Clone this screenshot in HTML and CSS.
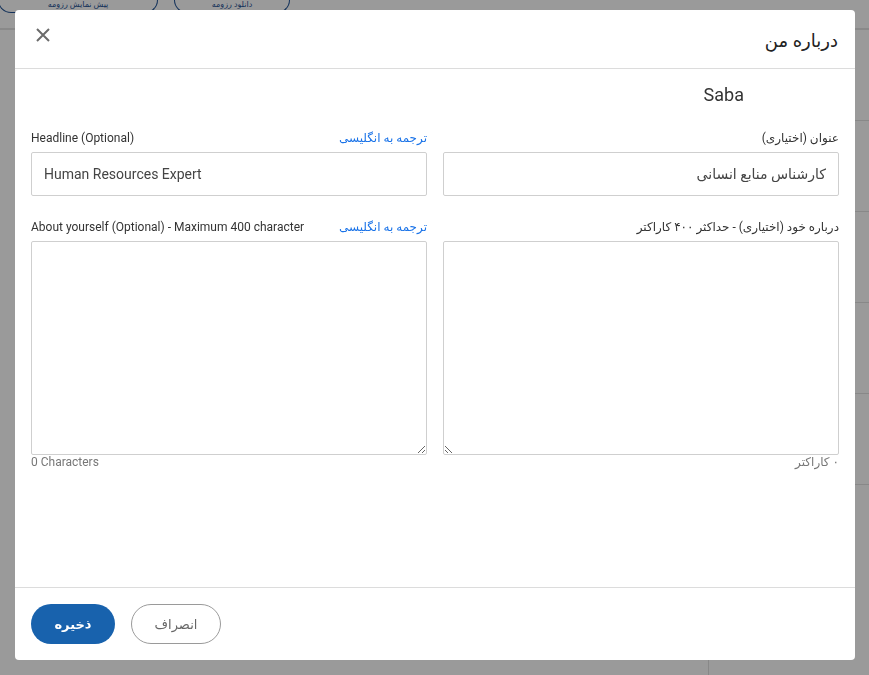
FILE: index.html
```html
<!DOCTYPE html>
<html lang="fa">
    <head>
        <meta charset="utf-8">
        <title>درباره من</title>
        <link rel="stylesheet" href="styles.css">
    </head>
    <body>
        <!-- safhe-ye posht-e modal -->
        <div class="page">
            <div class="topbar">
                <span class="pill pill-wide">پیش نمایش رزومه</span>
                <span class="pill">دانلود رزومه</span>
            </div>
            <div class="side">
                <div class="side-row"></div>
                <div class="side-row"></div>
                <div class="side-row"></div>
                <div class="side-row"></div>
                <div class="side-row"></div>
            </div>
        </div>

        <div class="overlay"></div>

        <div class="modal" dir="rtl">
            <div class="modal-head">
                <h2 class="modal-title">درباره من</h2>
                <button class="close-btn" aria-label="close">
                    <svg width="16" height="16" viewBox="0 0 16 16">
                        <path d="M2 2 L14 14 M14 2 L2 14" stroke="#6b6b6b" stroke-width="2" fill="none"/>
                    </svg>
                </button>
            </div>

            <div class="modal-body">
                <div class="name">Saba</div>

                <div class="fields">
                    <div class="field">
                        <div class="label-row">
                            <label class="label">عنوان (اختیاری)</label>
                        </div>
                        <input class="input" type="text" value="کارشناس منابع انسانی">
                    </div>
                    <div class="field" dir="ltr">
                        <div class="label-row">
                            <label class="label">Headline (Optional)</label>
                            <a class="translate" href="#" dir="rtl">ترجمه به انگلیسی</a>
                        </div>
                        <input class="input" type="text" value="Human Resources Expert">
                    </div>

                    <div class="field">
                        <div class="label-row">
                            <label class="label">درباره خود (اختیاری) - حداکثر ۴۰۰ کاراکتر</label>
                        </div>
                        <textarea class="textarea"></textarea>
                        <div class="counter">۰ کاراکتر</div>
                    </div>
                    <div class="field" dir="ltr">
                        <div class="label-row">
                            <label class="label">About yourself (Optional) - Maximum 400 character</label>
                            <a class="translate" href="#" dir="rtl">ترجمه به انگلیسی</a>
                        </div>
                        <textarea class="textarea"></textarea>
                        <div class="counter">0 Characters</div>
                    </div>
                </div>
            </div>

            <div class="modal-foot">
                <button class="btn btn-cancel">انصراف</button>
                <button class="btn btn-save">ذخیره</button>
            </div>
        </div>
    </body>
</html>
```

FILE: styles.css
```css
html, body {
    margin: 0;
    padding: 0;
    height: 100%;
}
body {
    background-color: #f4f4f4;
    font-family: Roboto, "DejaVu Sans", sans-serif;
    overflow: hidden;
}

/* posht-e modal */
.page {
    display: flex;
    flex-direction: column;
    height: 100%;
}
.topbar {
    display: flex;
    gap: 16px;
    height: 28px;
    border-bottom: 2px solid #dadada;
}
.pill {
    box-sizing: border-box;
    border: 1.5px solid #1f4f8f;
    border-top: 0;
    border-radius: 0 0 30px 30px;
    height: 13px;
    width: 116px;
    color: #1f4f8f;
    font-size: 8px;
    line-height: 9px;
    text-align: center;
    direction: rtl;
}
.pill-wide {
    width: 160px;
    margin-left: -2px;
}
.side {
    margin-left: auto;
    width: 160px;
    flex: 1;
    border-left: 1px solid #d8d8d8;
}
.side-row {
    height: 90px;
    border-bottom: 1px solid #d8d8d8;
}

.overlay {
    position: fixed;
    inset: 0;
    background-color: rgba(0,0,0,0.37);
}

/* modal */
.modal {
    position: fixed;
    left: 15px;
    top: 10px;
    width: 840px;
    height: 650px;
    background-color: white;
    border-radius: 4px;
    display: flex;
    flex-direction: column;
    color: #333;
}
.modal-head {
    height: 58px;
    border-bottom: 1px solid #dcdcdc;
    display: flex;
    align-items: center;
    justify-content: space-between;
    padding: 0 17px 0 20px;
}
.modal-title {
    margin: 0;
    font-size: 18px;
    font-weight: normal;
    color: #222;
    padding-top: 2px;
}
.close-btn {
    background: none;
    border: 0;
    padding: 0;
    width: 16px;
    height: 16px;
    margin-top: -8px;
    cursor: pointer;
}

.modal-body {
    flex: 1;
    padding: 0 16px;
}
.name {
    margin-top: 14px;
    padding-right: 95px;
    font-size: 18px;
    line-height: 24px;
    color: #333;
}
.fields {
    display: grid;
    grid-template-columns: 1fr 1fr;
    column-gap: 16px;
    margin-top: 23px;
}
.field {
    display: flex;
    flex-direction: column;
    margin-bottom: 23px;
}
.field:nth-child(n+3) {
    margin-bottom: 0;
}
.label-row {
    display: flex;
    justify-content: space-between;
    align-items: center;
    height: 16px;
    margin-bottom: 6px;
}
.label {
    font-size: 12px;
    color: #333;
}
.translate {
    font-size: 12px;
    color: #1a73e8;
    text-decoration: none;
}
.input {
    height: 44px;
    box-sizing: border-box;
    border: 1px solid #cfcfcf;
    border-radius: 2px;
    padding: 0 12px;
    font-family: Roboto, "DejaVu Sans", sans-serif;
    font-size: 14px;
    color: #444;
    outline: none;
}
.textarea {
    height: 214px;
    box-sizing: border-box;
    border: 1px solid #cfcfcf;
    border-radius: 2px;
    padding: 8px 12px;
    font-family: Roboto, "DejaVu Sans", sans-serif;
    font-size: 14px;
    outline: none;
    resize: both;
}
.counter {
    font-size: 12px;
    color: #777;
    height: 14px;
    line-height: 14px;
}

.modal-foot {
    border-top: 1px solid #dcdcdc;
    padding: 16px;
    display: flex;
    justify-content: flex-end;
    gap: 16px;
}
.btn {
    height: 40px;
    border-radius: 20px;
    font-family: Roboto, "DejaVu Sans", sans-serif;
    font-size: 13px;
    cursor: pointer;
}
.btn-cancel {
    width: 90px;
    background-color: white;
    border: 1px solid #9a9a9a;
    color: #666;
}
.btn-save {
    width: 84px;
    background-color: #1862ad;
    border: 0;
    color: white;
    font-weight: bold;
}
.btn-save:hover {
    background-color: #124f8f;
}
```
